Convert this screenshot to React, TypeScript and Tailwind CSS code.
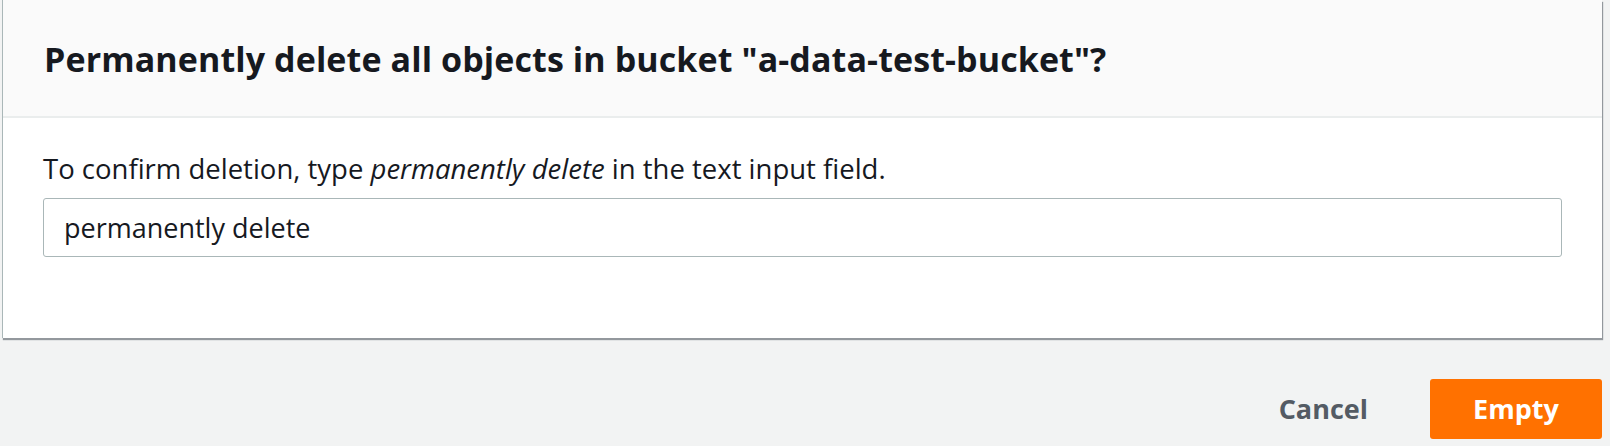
export default function App() {
  return (
    <div
      className="w-full h-[446px] bg-[#f2f3f3] overflow-hidden"
      style={{ fontFamily: '"Open Sans", "Noto Sans", Arial, sans-serif' }}
    >
      <div className="ml-[2px] w-[1600px] bg-white border-l border-[#aab7b8] shadow-[1px_2px_1px_0_rgba(84,91,100,0.6)]">
        <div className="h-[118px] bg-[#fafafa] border-b-2 border-[#eaeded] px-[41px] flex items-center pt-[2px]">
          <h1 className="text-[34px] font-bold text-[#16191f] tracking-[0.1px]">
            Permanently delete all objects in bucket "a-data-test-bucket"?
          </h1>
        </div>
        <div className="px-[40px] pt-[32px] pb-[81px]">
          <p className="text-[27.5px] leading-[38px] text-[#16191f] mb-[10px]">
            To confirm deletion, type <em>permanently delete</em> in the text input field.
          </p>
          <input
            readOnly
            value="permanently delete"
            className="w-full h-[59px] border border-[#aab7b8] rounded-[3px] px-[20px] text-[27px] text-[#16191f] outline-none"
          />
        </div>
      </div>
      <div className="flex justify-end items-center mt-[41px] pr-[8px]">
        <button className="pl-[40px] pr-[62px] h-[60px] text-[27px] font-bold text-[#545b64]">Cancel</button>
        <button className="w-[172px] h-[60px] rounded-[3px] bg-[#ff7100] text-white text-[27px] font-bold">
          Empty
        </button>
      </div>
    </div>
  )
}
